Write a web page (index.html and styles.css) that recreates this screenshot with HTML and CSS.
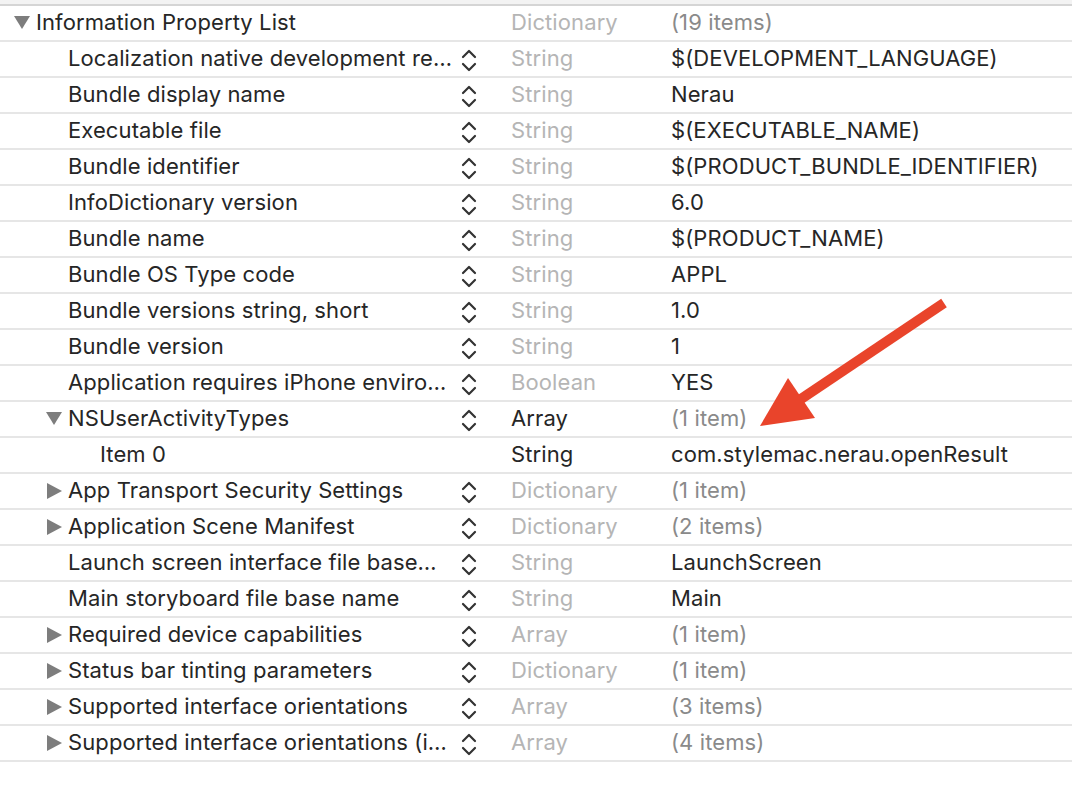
FILE: index.html
```html
<!DOCTYPE html>
<html>
<head>
<meta charset="utf-8">
<link rel="stylesheet" href="styles.css">
</head>
<body>
<div class="topband"></div>
<div class="list">
  <div class="row">
    <div class="key l0"><span class="tri down"></span><span class="ktext">Information Property List</span></div>
    <div class="step"></div>
    <div class="type">Dictionary</div>
    <div class="val dim">(19 items)</div>
  </div>
  <div class="row">
    <div class="key l1"><span class="tri"></span><span class="ktext">Localization native development re…</span></div>
    <div class="step"><svg class="chev" viewBox="0 0 16 24"><path d="M2 8 L8 2 L14 8 M2 15 L8 21 L14 15"/></svg></div>
    <div class="type">String</div>
    <div class="val">$(DEVELOPMENT_LANGUAGE)</div>
  </div>
  <div class="row">
    <div class="key l1"><span class="tri"></span><span class="ktext">Bundle display name</span></div>
    <div class="step"><svg class="chev" viewBox="0 0 16 24"><path d="M2 8 L8 2 L14 8 M2 15 L8 21 L14 15"/></svg></div>
    <div class="type">String</div>
    <div class="val">Nerau</div>
  </div>
  <div class="row">
    <div class="key l1"><span class="tri"></span><span class="ktext">Executable file</span></div>
    <div class="step"><svg class="chev" viewBox="0 0 16 24"><path d="M2 8 L8 2 L14 8 M2 15 L8 21 L14 15"/></svg></div>
    <div class="type">String</div>
    <div class="val">$(EXECUTABLE_NAME)</div>
  </div>
  <div class="row">
    <div class="key l1"><span class="tri"></span><span class="ktext">Bundle identifier</span></div>
    <div class="step"><svg class="chev" viewBox="0 0 16 24"><path d="M2 8 L8 2 L14 8 M2 15 L8 21 L14 15"/></svg></div>
    <div class="type">String</div>
    <div class="val">$(PRODUCT_BUNDLE_IDENTIFIER)</div>
  </div>
  <div class="row">
    <div class="key l1"><span class="tri"></span><span class="ktext">InfoDictionary version</span></div>
    <div class="step"><svg class="chev" viewBox="0 0 16 24"><path d="M2 8 L8 2 L14 8 M2 15 L8 21 L14 15"/></svg></div>
    <div class="type">String</div>
    <div class="val">6.0</div>
  </div>
  <div class="row">
    <div class="key l1"><span class="tri"></span><span class="ktext">Bundle name</span></div>
    <div class="step"><svg class="chev" viewBox="0 0 16 24"><path d="M2 8 L8 2 L14 8 M2 15 L8 21 L14 15"/></svg></div>
    <div class="type">String</div>
    <div class="val">$(PRODUCT_NAME)</div>
  </div>
  <div class="row">
    <div class="key l1"><span class="tri"></span><span class="ktext">Bundle OS Type code</span></div>
    <div class="step"><svg class="chev" viewBox="0 0 16 24"><path d="M2 8 L8 2 L14 8 M2 15 L8 21 L14 15"/></svg></div>
    <div class="type">String</div>
    <div class="val">APPL</div>
  </div>
  <div class="row">
    <div class="key l1"><span class="tri"></span><span class="ktext">Bundle versions string, short</span></div>
    <div class="step"><svg class="chev" viewBox="0 0 16 24"><path d="M2 8 L8 2 L14 8 M2 15 L8 21 L14 15"/></svg></div>
    <div class="type">String</div>
    <div class="val">1.0</div>
  </div>
  <div class="row">
    <div class="key l1"><span class="tri"></span><span class="ktext">Bundle version</span></div>
    <div class="step"><svg class="chev" viewBox="0 0 16 24"><path d="M2 8 L8 2 L14 8 M2 15 L8 21 L14 15"/></svg></div>
    <div class="type">String</div>
    <div class="val">1</div>
  </div>
  <div class="row">
    <div class="key l1"><span class="tri"></span><span class="ktext">Application requires iPhone enviro…</span></div>
    <div class="step"><svg class="chev" viewBox="0 0 16 24"><path d="M2 8 L8 2 L14 8 M2 15 L8 21 L14 15"/></svg></div>
    <div class="type">Boolean</div>
    <div class="val">YES</div>
  </div>
  <div class="row">
    <div class="key l1"><span class="tri down"></span><span class="ktext">NSUserActivityTypes</span></div>
    <div class="step"><svg class="chev" viewBox="0 0 16 24"><path d="M2 8 L8 2 L14 8 M2 15 L8 21 L14 15"/></svg></div>
    <div class="type strong">Array</div>
    <div class="val dim">(1 item)</div>
  </div>
  <div class="row">
    <div class="key l2"><span class="tri"></span><span class="ktext">Item 0</span></div>
    <div class="step"></div>
    <div class="type strong">String</div>
    <div class="val">com.stylemac.nerau.openResult</div>
  </div>
  <div class="row">
    <div class="key l1"><span class="tri right"></span><span class="ktext">App Transport Security Settings</span></div>
    <div class="step"><svg class="chev" viewBox="0 0 16 24"><path d="M2 8 L8 2 L14 8 M2 15 L8 21 L14 15"/></svg></div>
    <div class="type">Dictionary</div>
    <div class="val dim">(1 item)</div>
  </div>
  <div class="row">
    <div class="key l1"><span class="tri right"></span><span class="ktext">Application Scene Manifest</span></div>
    <div class="step"><svg class="chev" viewBox="0 0 16 24"><path d="M2 8 L8 2 L14 8 M2 15 L8 21 L14 15"/></svg></div>
    <div class="type">Dictionary</div>
    <div class="val dim">(2 items)</div>
  </div>
  <div class="row">
    <div class="key l1"><span class="tri"></span><span class="ktext">Launch screen interface file base…</span></div>
    <div class="step"><svg class="chev" viewBox="0 0 16 24"><path d="M2 8 L8 2 L14 8 M2 15 L8 21 L14 15"/></svg></div>
    <div class="type">String</div>
    <div class="val">LaunchScreen</div>
  </div>
  <div class="row">
    <div class="key l1"><span class="tri"></span><span class="ktext">Main storyboard file base name</span></div>
    <div class="step"><svg class="chev" viewBox="0 0 16 24"><path d="M2 8 L8 2 L14 8 M2 15 L8 21 L14 15"/></svg></div>
    <div class="type">String</div>
    <div class="val">Main</div>
  </div>
  <div class="row">
    <div class="key l1"><span class="tri right"></span><span class="ktext">Required device capabilities</span></div>
    <div class="step"><svg class="chev" viewBox="0 0 16 24"><path d="M2 8 L8 2 L14 8 M2 15 L8 21 L14 15"/></svg></div>
    <div class="type">Array</div>
    <div class="val dim">(1 item)</div>
  </div>
  <div class="row">
    <div class="key l1"><span class="tri right"></span><span class="ktext">Status bar tinting parameters</span></div>
    <div class="step"><svg class="chev" viewBox="0 0 16 24"><path d="M2 8 L8 2 L14 8 M2 15 L8 21 L14 15"/></svg></div>
    <div class="type">Dictionary</div>
    <div class="val dim">(1 item)</div>
  </div>
  <div class="row">
    <div class="key l1"><span class="tri right"></span><span class="ktext">Supported interface orientations</span></div>
    <div class="step"><svg class="chev" viewBox="0 0 16 24"><path d="M2 8 L8 2 L14 8 M2 15 L8 21 L14 15"/></svg></div>
    <div class="type">Array</div>
    <div class="val dim">(3 items)</div>
  </div>
  <div class="row">
    <div class="key l1"><span class="tri right"></span><span class="ktext">Supported interface orientations (i…</span></div>
    <div class="step"><svg class="chev" viewBox="0 0 16 24"><path d="M2 8 L8 2 L14 8 M2 15 L8 21 L14 15"/></svg></div>
    <div class="type">Array</div>
    <div class="val dim">(4 items)</div>
  </div>
</div>
<svg class="arrow" width="1072" height="790" viewBox="0 0 1072 790">
  <line x1="944" y1="303" x2="798" y2="401" stroke="#e9442b" stroke-width="10"/>
  <polygon points="760,426 788,378 815,418" fill="#e9442b"/>
</svg>
</body>
</html>
```

FILE: styles.css
```css
html, body {
  margin: 0;
  padding: 0;
  background: #ffffff;
}
body {
  width: 1072px;
  height: 790px;
  overflow: hidden;
  position: relative;
  font-family: Inter, "Liberation Sans", Arial, sans-serif;
  font-size: 22px;
  letter-spacing: 0.1px;
  color: #262626;
}
.topband {
  height: 4px;
  background: #f3f3f3;
  border-bottom: 2px solid #d5d5d5;
}
.list {
  display: flex;
  flex-direction: column;
}
.row {
  display: grid;
  grid-template-columns: 455px 56px 160px 1fr;
  height: 34px;
  border-bottom: 2px solid #e6e6e6;
  align-items: center;
  white-space: nowrap;
}
.ktext, .type, .val {
  padding-bottom: 2px;
}
.key {
  display: flex;
  align-items: center;
  overflow: hidden;
}
.key.l0 { padding-left: 4px; }
.key.l1 { padding-left: 36px; }
.key.l2 { padding-left: 68px; }
.tri {
  width: 32px;
  height: 34px;
  flex: none;
  position: relative;
}
.tri.down::before {
  content: "";
  position: absolute;
  left: 10px;
  top: 10px;
  border-left: 8px solid transparent;
  border-right: 8px solid transparent;
  border-top: 13px solid #7d7d7d;
}
.tri.right::before {
  content: "";
  position: absolute;
  left: 11px;
  top: 9px;
  border-top: 8px solid transparent;
  border-bottom: 8px solid transparent;
  border-left: 15px solid #7d7d7d;
}
.step {
  display: flex;
  align-items: center;
  height: 34px;
}
.chev {
  width: 16px;
  height: 24px;
  margin-left: 6px;
  margin-top: 4px;
}
.chev path {
  fill: none;
  stroke: #333333;
  stroke-width: 2.2;
  stroke-linecap: round;
  stroke-linejoin: round;
}
.type {
  color: #b5b5b5;
}
.type.strong {
  color: #262626;
}
.val.dim {
  color: #8a8a8a;
}
.arrow {
  position: absolute;
  left: 0;
  top: 0;
  pointer-events: none;
}
```
